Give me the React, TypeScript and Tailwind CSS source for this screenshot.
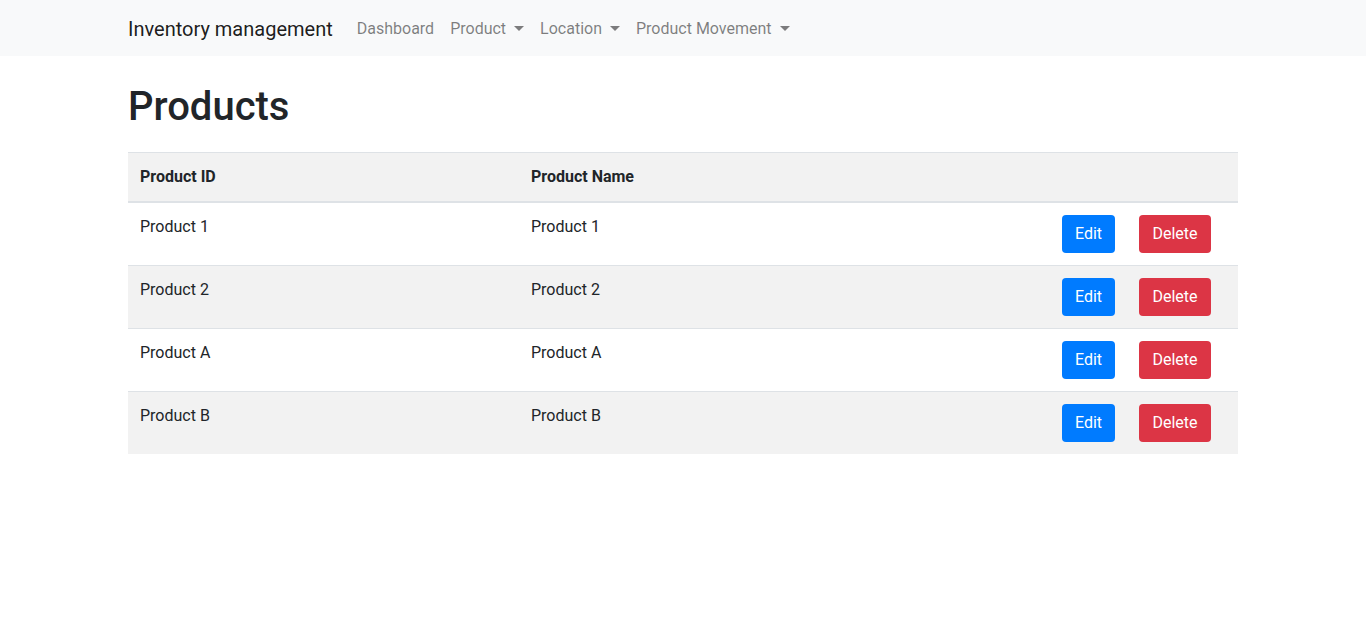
import React from "react";

const products = [
  { id: "Product 1", name: "Product 1" },
  { id: "Product 2", name: "Product 2" },
  { id: "Product A", name: "Product A" },
  { id: "Product B", name: "Product B" },
];

function Caret() {
  return (
    <span className="ml-[8px] inline-block align-[3px] border-t-[5px] border-x-[5px] border-b-0 border-solid border-t-current border-x-transparent" />
  );
}

export default function App() {
  return (
    <div className="min-h-[625px] bg-white text-[#212529] font-['Roboto','Segoe_UI','Liberation_Sans',sans-serif]">
      {/* Navbar */}
      <nav className="h-14 bg-[#f8f9fa]">
        <div className="mx-auto w-[1140px] px-[15px] h-full flex items-center pt-[2px]">
          <a className="text-[20px] leading-[30px] text-black/90 mr-4">Inventory management</a>
          <ul className="flex items-center text-base leading-6 text-black/50">
            <li className="px-2">Dashboard</li>
            <li className="px-2">
              Product
              <Caret />
            </li>
            <li className="px-2">
              Location
              <Caret />
            </li>
            <li className="px-2">
              Product Movement
              <Caret />
            </li>
          </ul>
        </div>
      </nav>

      {/* Content */}
      <main className="mx-auto w-[1140px] px-[15px] pt-[27px]">
        <h1 className="text-[40px] leading-[48px] font-medium mb-[21px]">Products</h1>

        <div className="text-base leading-6">
          <div className="flex bg-[#f2f2f2] border-t border-b-2 border-[#dee2e6] font-bold h-[51px]">
            <div className="w-[391px] px-3 py-3">Product ID</div>
            <div className="w-[531px] px-3 py-3">Product Name</div>
            <div className="flex-1" />
          </div>
          {products.map((p, i) => (
            <div
              key={p.id}
              className={
                "flex " +
                (i % 2 === 1 ? "bg-[#f2f2f2]" : "bg-white") +
                (i > 0 ? " h-[63px] border-t border-[#dee2e6]" : " h-[62px]")
              }
            >
              <div className="w-[391px] px-3 pt-3">{p.id}</div>
              <div className="w-[531px] px-3 pt-3">{p.name}</div>
              <div className="flex-1 flex items-start gap-6 px-3 pt-3">
                <button className="h-[38px] w-[53px] rounded-[4px] bg-[#007bff] text-white text-base">
                  Edit
                </button>
                <button className="h-[38px] w-[72px] rounded-[4px] bg-[#dc3545] text-white text-base">
                  Delete
                </button>
              </div>
            </div>
          ))}
        </div>
      </main>
    </div>
  );
}
